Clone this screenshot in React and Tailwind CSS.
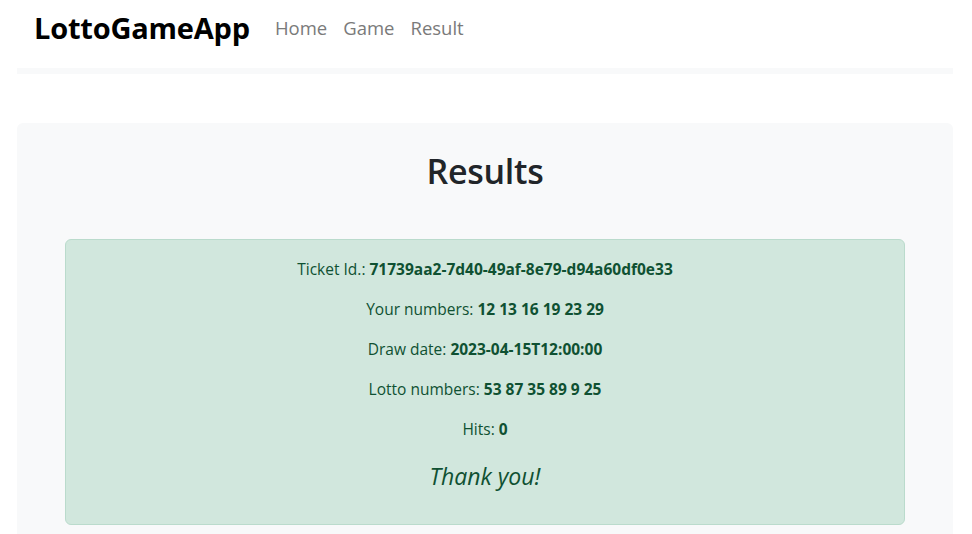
export default function App() {

    const rows = [
        { label: "Ticket Id.:", value: "71739aa2-7d40-49af-8e79-d94a60df0e33" },
        { label: "Your numbers:", value: "12 13 16 19 23 29" },
        { label: "Draw date:", value: "2023-04-15T12:00:00" },
        { label: "Lotto numbers:", value: "53 87 35 89 9 25" },
        { label: "Hits:", value: "0" },
    ];

    return (

        <div className="min-h-[534px] bg-white font-['Open_Sans',sans-serif] text-[#212529]">

            <nav className="pl-[17px] pr-[19px]">

                <div className="flex items-center h-[68px] pl-[17px] pb-[12px]">

                    <span className="text-[29px] font-bold text-black tracking-[-0.2px] mr-[25px]">
                        LottoGameApp
                    </span>

                    <a className="text-[18.5px] text-[#7a7a7a] mr-[16px]">Home</a>
                    <a className="text-[18.5px] text-[#7a7a7a] mr-[16px]">Game</a>
                    <a className="text-[18.5px] text-[#7a7a7a]">Result</a>

                </div>

                <div className="h-[6px] bg-[#f8f9fa]" />

            </nav>

            <div className="ml-[17px] mr-[19px] mt-[49px] bg-[#f8f9fa] rounded-[6px] pt-[24px] px-[48px] pb-[20px]">

                <h1 className="text-center text-[34px] font-semibold tracking-[-0.3px] leading-[48px] mb-[44px]">
                    Results
                </h1>

                <div className="bg-[#d1e7dd] border border-[#badbcc] rounded-[6px] text-[#0f5132] text-center pt-[17px] pb-[33px]">

                    {rows.map(r => (

                        <p key={r.label} className="text-[15.5px] leading-[24px] mb-[16px]">
                            {r.label} <b className="font-bold">{r.value}</b>
                        </p>

                    ))}

                    <p className="text-[23px] italic leading-[30px] mt-[20px]">
                        Thank you!
                    </p>

                </div>

            </div>

        </div>

    );

}
